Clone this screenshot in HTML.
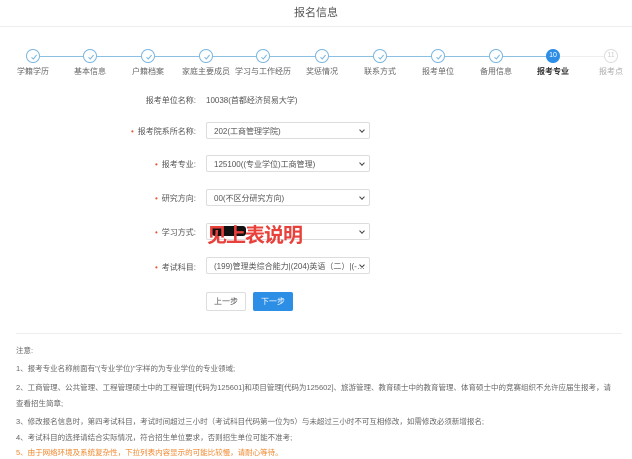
<!DOCTYPE html>
<html><head><meta charset="utf-8"><style>
*{margin:0;padding:0;box-sizing:border-box}
body{width:632px;height:459px;background:#fff;font-family:"Liberation Sans","Noto Sans CJK SC",sans-serif;color:#555;position:relative;overflow:hidden}
.a{position:absolute;white-space:nowrap}
.title{left:0;width:632px;top:4px;text-align:center;font-size:11px;color:#555}
.hr{position:absolute;left:0;width:632px;top:26px;height:1px;background:#eee}
.c{position:absolute;width:14px;height:14px;border-radius:50%;border:1px solid #7ab6e0;background:#fff;top:49px}
.c svg{position:absolute;left:3px;top:3px}
.ln{position:absolute;top:56px;height:1px;background:#8cc0e2}
.lb{position:absolute;top:66px;font-size:8px;color:#666;width:70px;text-align:center}
.lab{position:absolute;right:436px;font-size:8px;color:#555;text-align:right}
.lab b{color:#e4572e;font-weight:normal;margin-right:4px}
.sel{position:absolute;left:206px;width:164px;height:17px;border:1px solid #ddd;border-radius:2px;font-size:8px;color:#555;padding:3px 0 0 7px;white-space:nowrap}
.sel:after{content:"";position:absolute;right:5px;top:5px;width:3px;height:3px;border-right:1px solid #444;border-bottom:1px solid #444;transform:rotate(45deg)}
.note{position:absolute;left:16px;font-size:7.5px;color:#666;white-space:nowrap}
</style></head><body>
<div class="a title">报名信息</div>
<div class="hr"></div>
<!-- steps -->
<div class="ln" style="left:40px;width:43px"></div>
<div class="ln" style="left:97px;width:44px"></div>
<div class="ln" style="left:155px;width:44px"></div>
<div class="ln" style="left:213px;width:43px"></div>
<div class="ln" style="left:270px;width:45px"></div>
<div class="ln" style="left:329px;width:44px"></div>
<div class="ln" style="left:387px;width:44px"></div>
<div class="ln" style="left:445px;width:44px"></div>
<div class="ln" style="left:503px;width:43px"></div>
<div class="ln" style="left:560px;width:44px;background:#eee"></div>
<div class="c" style="left:26px"><svg width="8" height="8"><path d="M1.5 4.2L3.3 6 6.6 2" stroke="#7ab6e0" fill="none"/></svg></div>
<div class="c" style="left:83px"><svg width="8" height="8"><path d="M1.5 4.2L3.3 6 6.6 2" stroke="#7ab6e0" fill="none"/></svg></div>
<div class="c" style="left:141px"><svg width="8" height="8"><path d="M1.5 4.2L3.3 6 6.6 2" stroke="#7ab6e0" fill="none"/></svg></div>
<div class="c" style="left:199px"><svg width="8" height="8"><path d="M1.5 4.2L3.3 6 6.6 2" stroke="#7ab6e0" fill="none"/></svg></div>
<div class="c" style="left:256px"><svg width="8" height="8"><path d="M1.5 4.2L3.3 6 6.6 2" stroke="#7ab6e0" fill="none"/></svg></div>
<div class="c" style="left:315px"><svg width="8" height="8"><path d="M1.5 4.2L3.3 6 6.6 2" stroke="#7ab6e0" fill="none"/></svg></div>
<div class="c" style="left:373px"><svg width="8" height="8"><path d="M1.5 4.2L3.3 6 6.6 2" stroke="#7ab6e0" fill="none"/></svg></div>
<div class="c" style="left:431px"><svg width="8" height="8"><path d="M1.5 4.2L3.3 6 6.6 2" stroke="#7ab6e0" fill="none"/></svg></div>
<div class="c" style="left:489px"><svg width="8" height="8"><path d="M1.5 4.2L3.3 6 6.6 2" stroke="#7ab6e0" fill="none"/></svg></div>
<div class="c" style="left:546px;background:#2d8ee6;border-color:#2d8ee6;color:#fff;font-size:7px;text-align:center;line-height:12px">10</div>
<div class="c" style="left:604px;border-color:#ddd;color:#ccc;font-size:7px;text-align:center;line-height:12px">11</div>
<div class="lb" style="left:-2px">学籍学历</div>
<div class="lb" style="left:55px">基本信息</div>
<div class="lb" style="left:113px">户籍档案</div>
<div class="lb" style="left:171px">家庭主要成员</div>
<div class="lb" style="left:228px">学习与工作经历</div>
<div class="lb" style="left:287px">奖惩情况</div>
<div class="lb" style="left:345px">联系方式</div>
<div class="lb" style="left:403px">报考单位</div>
<div class="lb" style="left:461px">备用信息</div>
<div class="lb" style="left:518px;color:#333;font-weight:bold">报考专业</div>
<div class="lb" style="left:576px;color:#aaa">报考点</div>
<!-- form -->
<div class="lab" style="top:95px">报考单位名称:</div>
<div class="a" style="left:206px;top:95px;font-size:8px">10038(首都经济贸易大学)</div>
<div class="lab" style="top:126px"><b>•</b>报考院系所名称:</div>
<div class="sel" style="top:122px">202(工商管理学院)</div>
<div class="lab" style="top:159px"><b>•</b>报考专业:</div>
<div class="sel" style="top:155px">125100((专业学位)工商管理)</div>
<div class="lab" style="top:193px"><b>•</b>研究方向:</div>
<div class="sel" style="top:189px">00(不区分研究方向)</div>
<div class="lab" style="top:227px"><b>•</b>学习方式:</div>
<div class="sel" style="top:223px"></div>
<div class="lab" style="top:262px"><b>•</b>考试科目:</div>
<div class="sel" style="top:257px">(199)管理类综合能力|(204)英语（二）|(-…</div>
<div class="a" style="left:212px;top:226px;width:34px;height:10px;background:#111;border-radius:3px"></div>
<div class="a" style="left:207px;top:219px;font-size:20px;color:#e8403a;font-weight:bold;letter-spacing:-1px">见上表说明</div>
<div class="a" style="left:206px;top:292px;width:40px;height:19px;border:1px solid #ddd;border-radius:2px;font-size:8px;text-align:center;line-height:17px;color:#555">上一步</div>
<div class="a" style="left:253px;top:292px;width:40px;height:19px;background:#2d8ee6;border-radius:2px;font-size:8px;text-align:center;line-height:19px;color:#fff">下一步</div>
<div class="a" style="left:16px;top:333px;width:606px;height:1px;background:#eee"></div>
<!-- notes -->
<div class="note" style="top:345px">注意:</div>
<div class="note" style="top:363px">1、报考专业名称前面有"(专业学位)"字样的为专业学位的专业领域;</div>
<div class="note" style="top:382px">2、工商管理、公共管理、工程管理硕士中的工程管理[代码为125601]和项目管理[代码为125602]、旅游管理、教育硕士中的教育管理、体育硕士中的竞赛组织不允许应届生报考，请</div>
<div class="note" style="top:398px">查看招生简章;</div>
<div class="note" style="top:416px">3、修改报名信息时，第四考试科目，考试时间超过三小时（考试科目代码第一位为5）与未超过三小时不可互相修改，如需修改必须新增报名;</div>
<div class="note" style="top:432px">4、考试科目的选择请结合实际情况，符合招生单位要求，否则招生单位可能不准考;</div>
<div class="note" style="top:447px;color:#f0862a">5、由于网络环境及系统复杂性，下拉列表内容显示的可能比较慢，请耐心等待。</div>
</body></html>
